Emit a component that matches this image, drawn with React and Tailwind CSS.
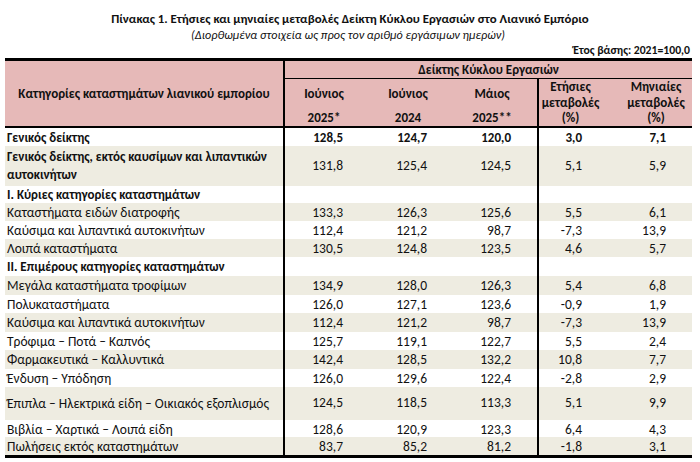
import React from "react";

const rows = [
  { label: "Γενικός δείκτης", v: ["128,5", "124,7", "120,0", "3,0", "7,1"], bold: true, h: "h-[18px]" },
  {
    label: ["Γενικός δείκτης, εκτός καυσίμων και λιπαντικών", "αυτοκινήτων"],
    v: ["131,8", "125,4", "124,5", "5,1", "5,9"],
    boldLabel: true,
    h: "h-[40px]",
    gray: true,
  },
  { label: "I. Κύριες κατηγορίες καταστημάτων", section: true, h: "h-[17px]" },
  { label: "Καταστήματα ειδών διατροφής", v: ["133,3", "126,3", "125,6", "5,5", "6,1"], h: "h-[18px]", gray: true },
  { label: "Καύσιμα και λιπαντικά αυτοκινήτων", v: ["112,4", "121,2", "98,7", "-7,3", "13,9"], h: "h-[18px]" },
  { label: "Λοιπά καταστήματα", v: ["130,5", "124,8", "123,5", "4,6", "5,7"], h: "h-[18px]", gray: true },
  { label: "II. Επιμέρους κατηγορίες καταστημάτων", section: true, h: "h-[19px]" },
  { label: "Μεγάλα καταστήματα τροφίμων", v: ["134,9", "128,0", "126,3", "5,4", "6,8"], h: "h-[19px]", gray: true },
  { label: "Πολυκαταστήματα", v: ["126,0", "127,1", "123,6", "-0,9", "1,9"], h: "h-[18px]" },
  { label: "Καύσιμα και λιπαντικά αυτοκινήτων", v: ["112,4", "121,2", "98,7", "-7,3", "13,9"], h: "h-[19px]", gray: true },
  { label: "Τρόφιμα – Ποτά – Καπνός", v: ["125,7", "119,1", "122,7", "5,5", "2,4"], h: "h-[18px]" },
  { label: "Φαρμακευτικά – Καλλυντικά", v: ["142,4", "128,5", "132,2", "10,8", "7,7"], h: "h-[19px]", gray: true },
  { label: "Ένδυση – Υπόδηση", v: ["126,0", "129,6", "122,4", "-2,8", "2,9"], h: "h-[18px]" },
  { label: "Έπιπλα – Ηλεκτρικά είδη – Οικιακός εξοπλισμός", v: ["124,5", "118,5", "113,3", "5,1", "9,9"], h: "h-[33px]", gray: true },
  { label: "Βιβλία – Χαρτικά – Λοιπά είδη", v: ["128,6", "120,9", "123,3", "6,4", "4,3"], h: "h-[17px]" },
  { label: "Πωλήσεις εκτός καταστημάτων", v: ["83,7", "85,2", "81,2", "-1,8", "3,1"], h: "h-[18px]", gray: true },
];

const cols = "grid grid-cols-[280px_84px_84px_84px_71px_84px]";

const Row = ({ r }) => {
  const boldLabel = r.bold || r.boldLabel || r.section;
  const lines = Array.isArray(r.label) ? r.label : [r.label];
  return (
    <div className={`${cols} ${r.h} ${r.gray ? "bg-[#eeece1]" : "bg-white"}`}>
      <div
        className={`flex flex-col justify-center pl-[2px] pr-[2px] border-r-2 border-black ${
          boldLabel ? "font-bold text-[13px]" : "text-[13.5px]"
        }`}
      >
        {lines.map((l, i) => (
          <div key={i} className="h-[18px] leading-[18px] whitespace-nowrap">
            {l}
          </div>
        ))}
      </div>
      {(r.v || ["", "", "", "", ""]).map((x, i) => (
        <div
          key={i}
          className={`flex items-center justify-end pr-[26px] ${
            r.bold ? "font-bold text-[13px]" : "text-[13.5px]"
          } ${i === 3 ? "border-l-2 border-black" : ""}`}
        >
          {x}
        </div>
      ))}
    </div>
  );
};

export default function App() {
  return (
    <div
      className="w-[700px] h-[462px] bg-white text-[#111] text-[13px] overflow-hidden"
      style={{ fontFamily: "Carlito, Roboto, sans-serif" }}
    >
      <div className="pt-[10px] text-center">
        <div className="h-[17px] leading-[17px] text-[12.8px] font-bold">
          Πίνακας 1. Ετήσιες και μηνιαίες μεταβολές Δείκτη Κύκλου Εργασιών στο Λιανικό Εμπόριο
        </div>
        <div className="h-[16px] leading-[16px] text-[12.2px] italic pr-[4px]">
          (Διορθωμένα στοιχεία ως προς τον αριθμό εργάσιμων ημερών)
        </div>
      </div>
      <div className="h-[15px] leading-[15px] text-[11.7px] font-bold text-right pr-[10px]">
        Έτος βάσης: 2021=100,0
      </div>

      <div className="ml-[5px] w-[687px] border-t-[3px] border-black">
        {/* header */}
        <div className={`${cols} bg-[#e6b9b8] font-bold border-b-2 border-black`}>
          <div className="row-span-2 flex items-center justify-center border-r-2 border-black">
            Κατηγορίες καταστημάτων λιανικού εμπορίου
          </div>
          <div className="col-span-5 h-[18px] flex items-center justify-center border-b border-black">
            Δείκτης Κύκλου Εργασιών
          </div>
          <div className="h-[47px] flex flex-col items-center pt-[7px] pr-[6px] leading-[16px]">
            <span>Ιούνιος</span>
            <span className="mt-[8px]">2025*</span>
          </div>
          <div className="h-[47px] flex flex-col items-center pt-[7px] pr-[6px] leading-[16px]">
            <span>Ιούνιος</span>
            <span className="mt-[8px]">2024</span>
          </div>
          <div className="h-[47px] flex flex-col items-center pt-[7px] pr-[6px] leading-[16px]">
            <span>Μάιος</span>
            <span className="mt-[8px]">2025**</span>
          </div>
          <div className="h-[47px] flex flex-col items-center justify-center leading-[15.7px] border-l-2 border-black pr-[6px]">
            <span>Ετήσιες</span>
            <span>μεταβολές</span>
            <span>(%)</span>
          </div>
          <div className="h-[47px] flex flex-col items-center justify-center leading-[15.7px] pl-[12px]">
            <span>Μηνιαίες</span>
            <span>μεταβολές</span>
            <span>(%)</span>
          </div>
        </div>

        {rows.map((r, i) => (
          <Row key={i} r={r} />
        ))}
        <div className="border-t-[3px] border-black" />
      </div>
    </div>
  );
}
